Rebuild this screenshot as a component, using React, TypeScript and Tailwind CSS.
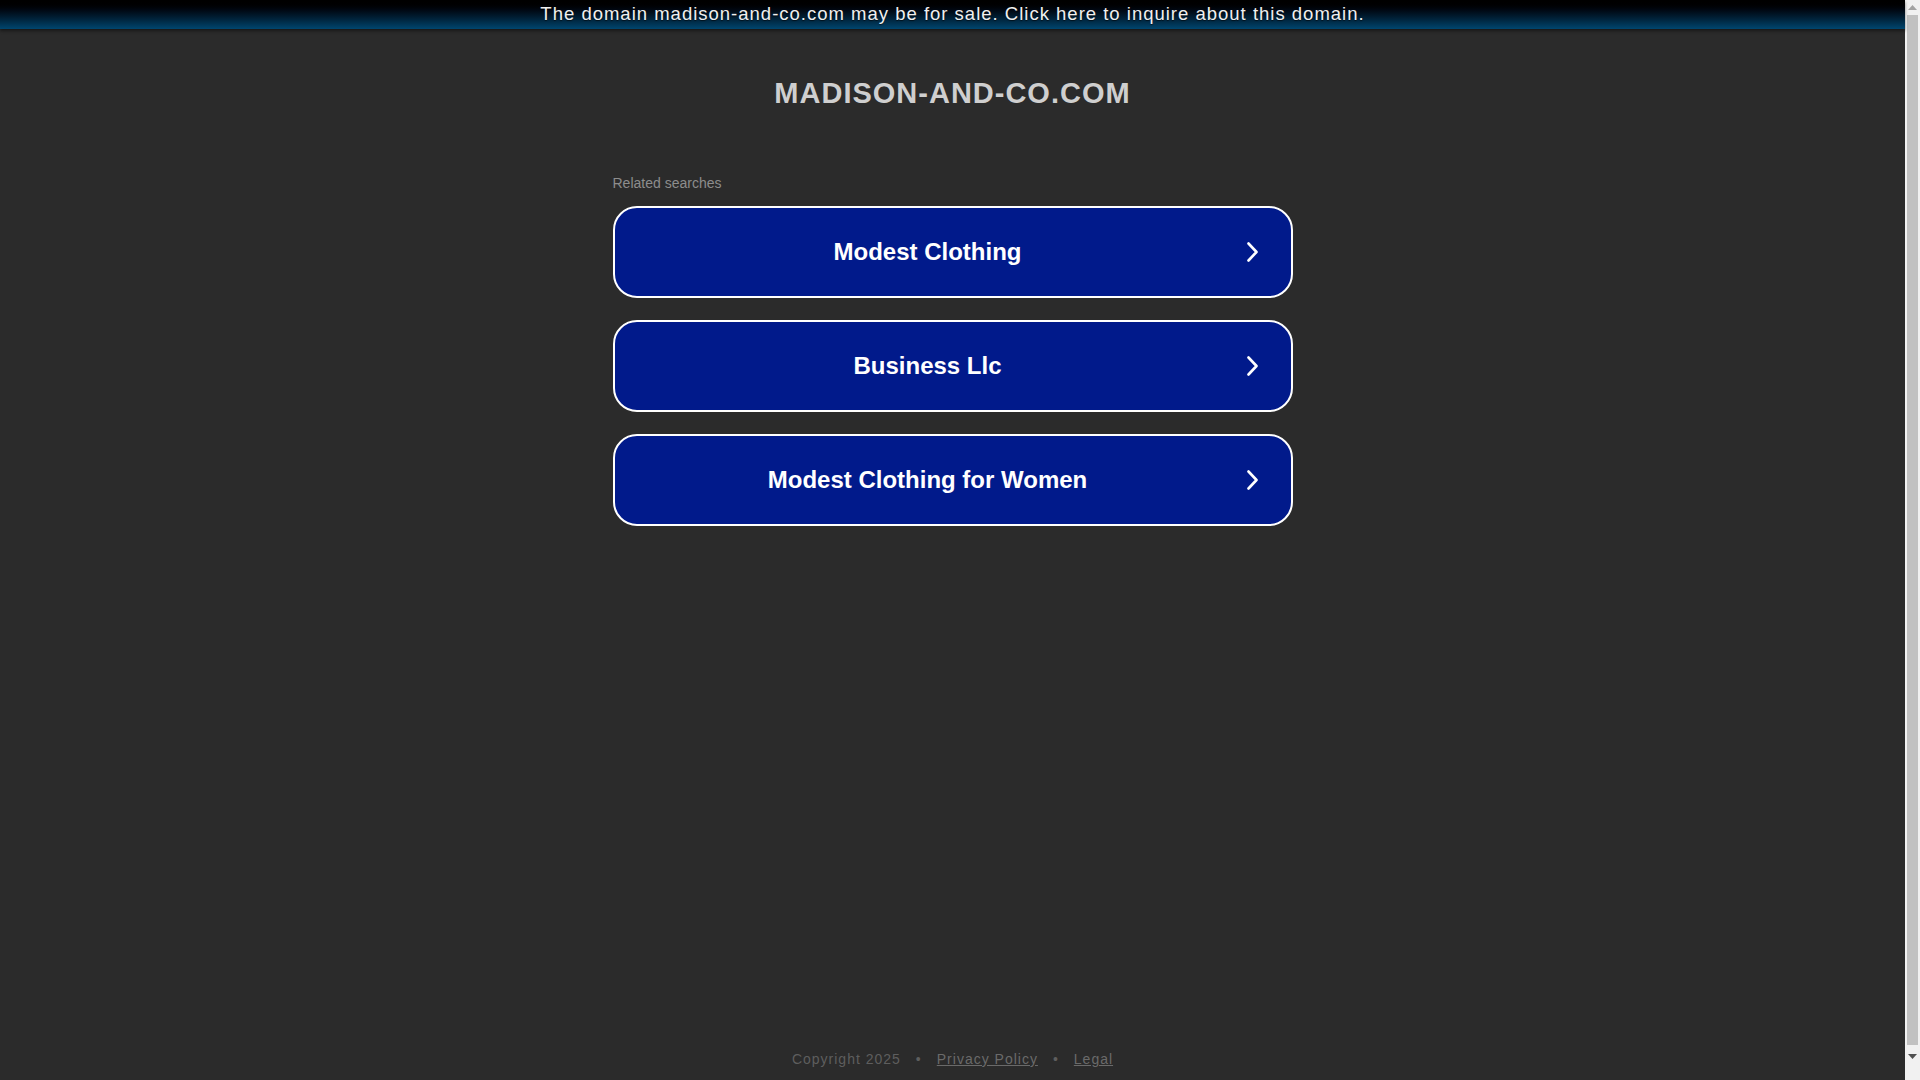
import React from "react";

const searches = ["Modest Clothing", "Business Llc", "Modest Clothing for Women"];

function Chevron() {
  return (
    <svg viewBox="0 0 11 20" className="ml-[6px] h-[20px] w-[11px] shrink-0" fill="none">
      <path d="M1.5 1.5 L9.5 10 L1.5 18.5" stroke="#ffffff" strokeWidth="2.6" strokeLinecap="round" strokeLinejoin="round" />
    </svg>
  );
}

// browser scrollbar as it shows in the screenshot
function ScrollBar() {
  return (
    <div className="flex h-full w-[15px] shrink-0 flex-col items-center bg-[#f1f1f1]">
      <svg viewBox="0 0 9 5" className="mt-[5px] h-[5px] w-[9px]">
        <path d="M4.5 0 L9 5 L0 5 Z" fill="#a3a3a3" />
      </svg>
      <div className="mt-[5px] mb-[9px] w-[11px] flex-1 bg-[#c1c1c1]" />
      <svg viewBox="0 0 9 5" className="mb-[6px] h-[5px] w-[9px]">
        <path d="M0 0 L9 0 L4.5 5 Z" fill="#505050" />
      </svg>
      <div className="h-[15px]" />
    </div>
  );
}

export default function App() {
  return (
    <div className="flex h-screen w-full overflow-hidden bg-[#2b2b2b] font-['Liberation_Sans',Arial,sans-serif]">
      <div className="flex min-w-0 flex-1 flex-col">
        <div className="relative z-10 h-[29px] w-full bg-gradient-to-b from-[#000000] to-[#00466f] text-center shadow-[0_2px_3px_rgba(0,0,0,0.45)]">
          <a className="cursor-pointer text-[18.5px] leading-[28px] tracking-[1px] text-[#f0f0f0] [text-shadow:0_1px_1px_rgba(0,0,0,0.6)]">
            The domain madison-and-co.com may be for sale. Click here to inquire about this domain.
          </a>
        </div>

        <div className="mx-auto flex w-[680px] flex-col">
          <h1 className="mt-[48px] text-center text-[29px] font-bold leading-[33px] tracking-[1px] text-[#cfcfcf]">
            MADISON-AND-CO.COM
          </h1>

          <p className="mt-[65px] text-[14px] leading-[16px] text-[#8d8d8d]">Related searches</p>

          <div className="mt-[15px] flex flex-col gap-[22px]">
            {searches.map((s) => (
              <a
                key={s}
                className="flex h-[92px] cursor-pointer items-center rounded-[24px] border-2 border-white bg-[#011a8b] pr-[33px]"
              >
                <span className="flex-1 text-center text-[24px] font-bold text-white">{s}</span>
                <Chevron />
              </a>
            ))}
          </div>
        </div>

        <footer className="mt-auto pb-[13px] text-center text-[14px] leading-[16px] tracking-[1px] text-[#5e5e5e]">
          <span>Copyright 2025</span>
          <span className="mx-[15px]">•</span>
          <a className="cursor-pointer text-[#6a6a6a] underline">Privacy Policy</a>
          <span className="mx-[15px]">•</span>
          <a className="cursor-pointer text-[#6a6a6a] underline">Legal</a>
        </footer>
      </div>
      <ScrollBar />
    </div>
  );
}
